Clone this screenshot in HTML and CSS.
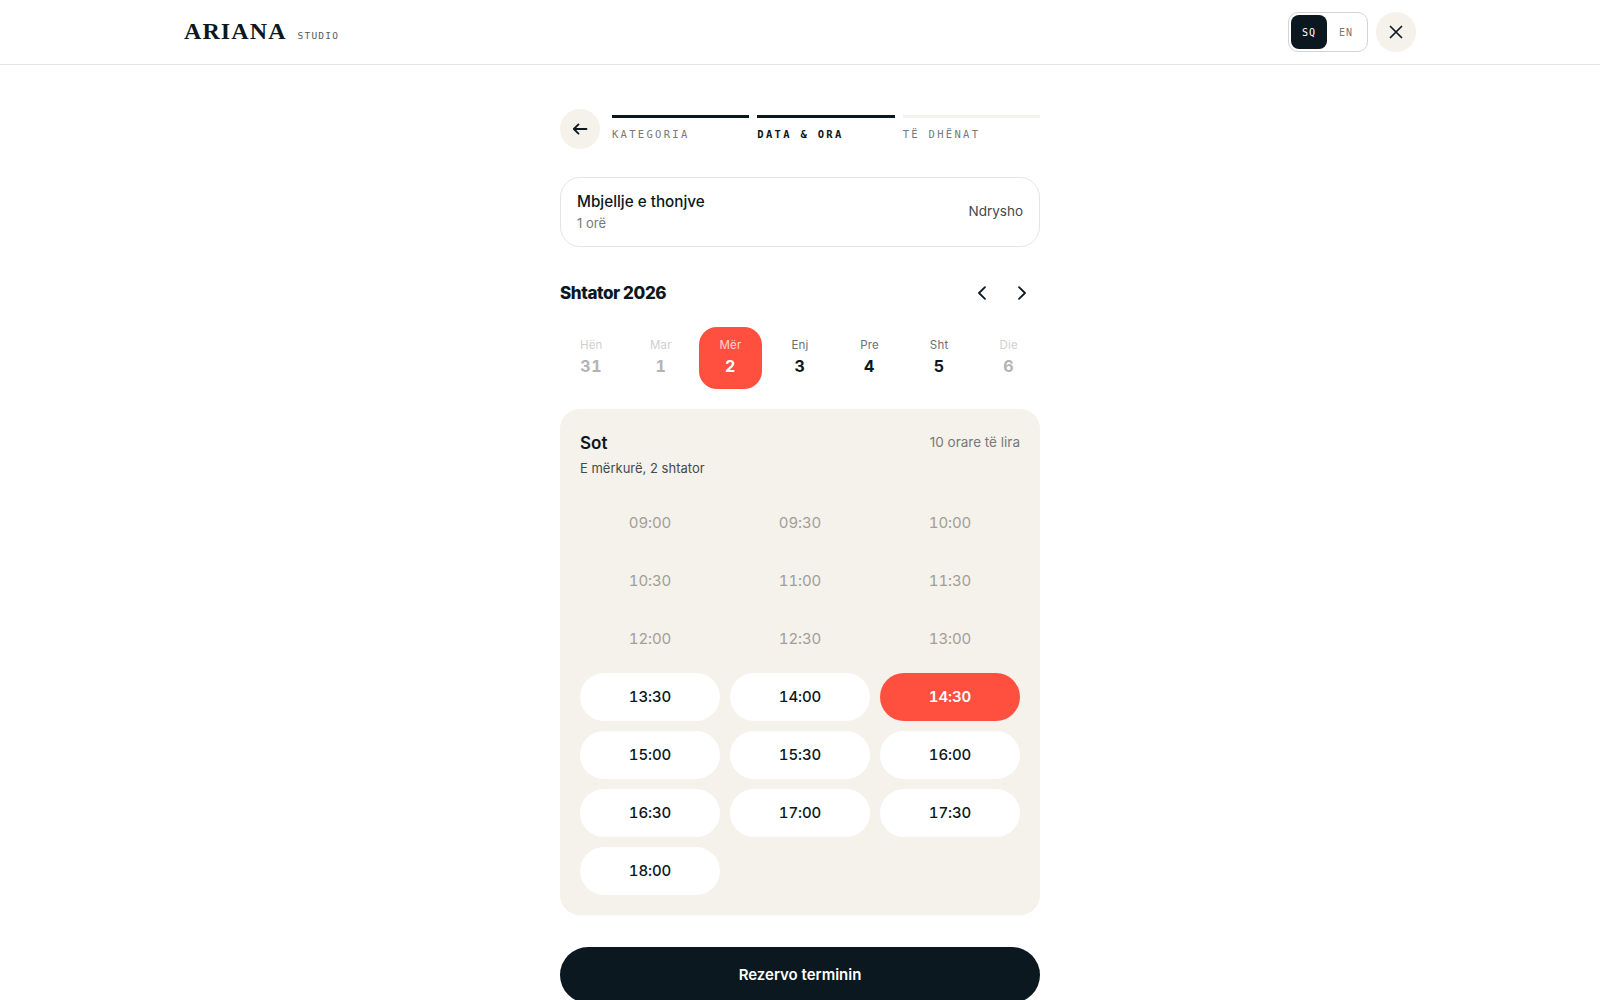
FILE: index.html
```html
<!DOCTYPE html>
<html lang="sq">
<head>
    <title>Ariana Studio</title>
    <meta charset="utf-8">
    <meta name="viewport" content="width=device-width, initial-scale=1">
    <link rel="stylesheet" href="styles.css">
</head>
<body>
    <header class="topbar">
        <div class="topbar-inner">
            <div class="logo">
                <span class="logo-name">ARIANA</span>
                <span class="logo-sub">STUDIO</span>
            </div>
            <div class="topbar-actions">
                <div class="lang">
                    <span class="lang-item lang-active">SQ</span>
                    <span class="lang-item">EN</span>
                </div>
                <button class="round-btn" aria-label="Mbyll">
                    <svg width="16" height="16" viewBox="0 0 16 16" fill="none" stroke="#0d1821" stroke-width="1.7" stroke-linecap="round"><path d="M2.5 2.5l11 11M13.5 2.5l-11 11"/></svg>
                </button>
            </div>
        </div>
    </header>

    <main class="booking">
        <div class="progress">
            <button class="round-btn" aria-label="Kthehu">
                <svg width="16" height="16" viewBox="0 0 16 16" fill="none" stroke="#0d1821" stroke-width="1.8" stroke-linecap="round" stroke-linejoin="round"><path d="M14.5 8H1.8M6.5 3.4L1.8 8l4.7 4.6"/></svg>
            </button>
            <div class="steps">
                <div class="step step-done">KATEGORIA</div>
                <div class="step step-current">DATA &amp; ORA</div>
                <div class="step">TË DHËNAT</div>
            </div>
        </div>

        <div class="service">
            <div>
                <div class="service-name">Mbjellje e thonjve</div>
                <div class="service-time">1 orë</div>
            </div>
            <span class="service-change">Ndrysho</span>
        </div>

        <div class="month">
            <h2 class="month-title">Shtator 2026</h2>
            <div class="month-nav">
                <svg width="16" height="16" viewBox="0 0 16 16" fill="none" stroke="#0d1821" stroke-width="1.8" stroke-linecap="round" stroke-linejoin="round"><path d="M11 2.2L5 8l6 5.8"/></svg>
                <svg width="16" height="16" viewBox="0 0 16 16" fill="none" stroke="#0d1821" stroke-width="1.8" stroke-linecap="round" stroke-linejoin="round"><path d="M5 2.2L11 8l-6 5.8"/></svg>
            </div>
        </div>

        <div class="days">
            <div class="day day-off"><span class="day-name">Hën</span><span class="day-num">31</span></div>
            <div class="day day-off"><span class="day-name">Mar</span><span class="day-num">1</span></div>
            <div class="day day-active"><span class="day-name">Mër</span><span class="day-num">2</span></div>
            <div class="day"><span class="day-name">Enj</span><span class="day-num">3</span></div>
            <div class="day"><span class="day-name">Pre</span><span class="day-num">4</span></div>
            <div class="day"><span class="day-name">Sht</span><span class="day-num">5</span></div>
            <div class="day day-off"><span class="day-name">Die</span><span class="day-num">6</span></div>
        </div>

        <section class="panel">
            <div class="panel-head">
                <div>
                    <div class="panel-title">Sot</div>
                    <div class="panel-date">E mërkurë, 2 shtator</div>
                </div>
                <span class="panel-count">10 orare të lira</span>
            </div>
            <div class="slots">
                <span class="slot slot-off">09:00</span>
                <span class="slot slot-off">09:30</span>
                <span class="slot slot-off">10:00</span>
                <span class="slot slot-off">10:30</span>
                <span class="slot slot-off">11:00</span>
                <span class="slot slot-off">11:30</span>
                <span class="slot slot-off">12:00</span>
                <span class="slot slot-off">12:30</span>
                <span class="slot slot-off">13:00</span>
                <span class="slot">13:30</span>
                <span class="slot">14:00</span>
                <span class="slot slot-active">14:30</span>
                <span class="slot">15:00</span>
                <span class="slot">15:30</span>
                <span class="slot">16:00</span>
                <span class="slot">16:30</span>
                <span class="slot">17:00</span>
                <span class="slot">17:30</span>
                <span class="slot">18:00</span>
            </div>
        </section>

        <button class="submit">Rezervo terminin</button>
    </main>
</body>
</html>
```

FILE: styles.css
```css
* {
    box-sizing: border-box;
}

html, body {
    height: 1000px;
    overflow: hidden;
}

body {
    margin: 0;
    background-color: #ffffff;
    color: #0c1820;
    font-family: "Inter", "Noto Sans", sans-serif;
}

.topbar {
    height: 65px;
    border-bottom: 1px solid #e4e4e2;
}

.topbar-inner {
    width: 1232px;
    height: 64px;
    margin: 0 auto;
    display: flex;
    align-items: center;
    justify-content: space-between;
}

.logo {
    display: flex;
    align-items: baseline;
    gap: 11px;
    padding-bottom: 2px;
}

.logo-name {
    font-family: "Liberation Serif", serif;
    font-weight: 700;
    font-size: 24px;
    letter-spacing: 1.1px;
}

.logo-sub {
    font-family: "DejaVu Sans Mono", monospace;
    font-size: 9.5px;
    letter-spacing: 1.2px;
    color: #55595c;
}

.topbar-actions {
    display: flex;
    align-items: center;
    gap: 8px;
}

.lang {
    display: flex;
    width: 80px;
    height: 40px;
    padding: 2px;
    border: 1px solid #d4d4d0;
    border-radius: 10px;
}

.lang-item {
    flex: 1;
    display: flex;
    align-items: center;
    justify-content: center;
    font-family: "DejaVu Sans Mono", monospace;
    font-size: 10px;
    letter-spacing: 1px;
    color: #77797a;
}

.lang-active {
    flex: none;
    width: 36px;
    background: #0c1820;
    border-radius: 8px;
    color: #ffffff;
}

.round-btn {
    width: 40px;
    height: 40px;
    padding: 0;
    border: none;
    border-radius: 50%;
    background: #f5f1eb;
    display: flex;
    align-items: center;
    justify-content: center;
    flex-shrink: 0;
}

.booking {
    width: 480px;
    margin: 0 auto;
    padding-top: 44px;
}

.progress {
    display: flex;
    gap: 12px;
}

.steps {
    flex: 1;
    display: grid;
    grid-template-columns: repeat(3, 1fr);
    gap: 8px;
}

.step {
    margin-top: 6px;
    padding-top: 10px;
    border-top: 3px solid #f5f1eb;
    font-family: "DejaVu Sans Mono", monospace;
    font-size: 10.5px;
    letter-spacing: 2.3px;
    color: #77797a;
}

.step-done {
    border-top-color: #0c1820;
}

.step-current {
    border-top-color: #0c1820;
    color: #0c1820;
    font-weight: 700;
}

.service {
    margin-top: 28px;
    height: 70px;
    padding: 0 16px;
    border: 1px solid #e4e4e2;
    border-radius: 20px;
    display: flex;
    align-items: center;
    justify-content: space-between;
}

.service-name {
    margin-top: 1px;
    font-size: 15.25px;
    font-weight: 500;
    line-height: 20px;
    margin-bottom: 1px;
}

.service-time {
    font-size: 13px;
    line-height: 20px;
    color: #77797a;
}

.service-change {
    font-size: 13.5px;
    color: #44494d;
    margin-bottom: 2px;
}

.month {
    margin-top: 30px;
    height: 32px;
    display: flex;
    align-items: center;
    justify-content: space-between;
}

.month-title {
    margin: 0;
    font-size: 17px;
    font-weight: 800;
    letter-spacing: -0.4px;
}

.month-nav {
    display: flex;
    gap: 24px;
    padding-right: 10px;
}

.days {
    margin-top: 18px;
    display: grid;
    grid-template-columns: repeat(7, 1fr);
    gap: 7px;
}

.day {
    height: 62px;
    padding-bottom: 4px;
    border-radius: 18px;
    display: flex;
    flex-direction: column;
    align-items: center;
    justify-content: center;
    gap: 3px;
}

.day-name {
    font-size: 11.5px;
    line-height: 16px;
    letter-spacing: 0.2px;
    color: #6b6f72;
}

.day-num {
    font-size: 16px;
    line-height: 20px;
    font-weight: 700;
    letter-spacing: 0.6px;
    font-variant-numeric: tabular-nums;
}

.day-off .day-name {
    color: #cfcfcd;
}

.day-off .day-num {
    color: #b3b3b1;
}

.day-active {
    background: #ff4f3f;
    color: #ffffff;
}

.day-active .day-name {
    color: #ffd9d5;
}

.panel {
    margin-top: 20px;
    padding: 20px;
    background: #f5f1eb;
    border-radius: 20px;
}

.panel-head {
    display: flex;
    justify-content: space-between;
    align-items: flex-start;
    height: 70px;
}

.panel-title {
    margin-top: 1px;
    font-size: 17px;
    font-weight: 600;
    line-height: 26px;
}

.panel-date {
    margin-top: 2px;
    font-size: 13px;
    line-height: 20px;
    color: #44494d;
}

.panel-count {
    font-size: 13.5px;
    line-height: 26px;
    color: #77797a;
}

.slots {
    display: grid;
    grid-template-columns: repeat(3, 1fr);
    gap: 10px;
}

.slot {
    height: 48px;
    padding-bottom: 1px;
    border-radius: 24px;
    background: #ffffff;
    display: flex;
    align-items: center;
    justify-content: center;
    font-size: 15px;
    font-weight: 500;
    letter-spacing: -0.1px;
    font-variant-numeric: tabular-nums;
}

.slot-off {
    background: transparent;
    color: #a09e98;
    font-weight: 400;
}

.slot-active {
    background: #ff4f3f;
    color: #ffffff;
    font-weight: 600;
}

.submit {
    margin-top: 32px;
    width: 100%;
    height: 56px;
    padding: 0 0 2px;
    border: none;
    border-radius: 28px;
    background: #0c1820;
    color: #ffffff;
    font-family: inherit;
    font-size: 15px;
    font-weight: 600;
}
```
